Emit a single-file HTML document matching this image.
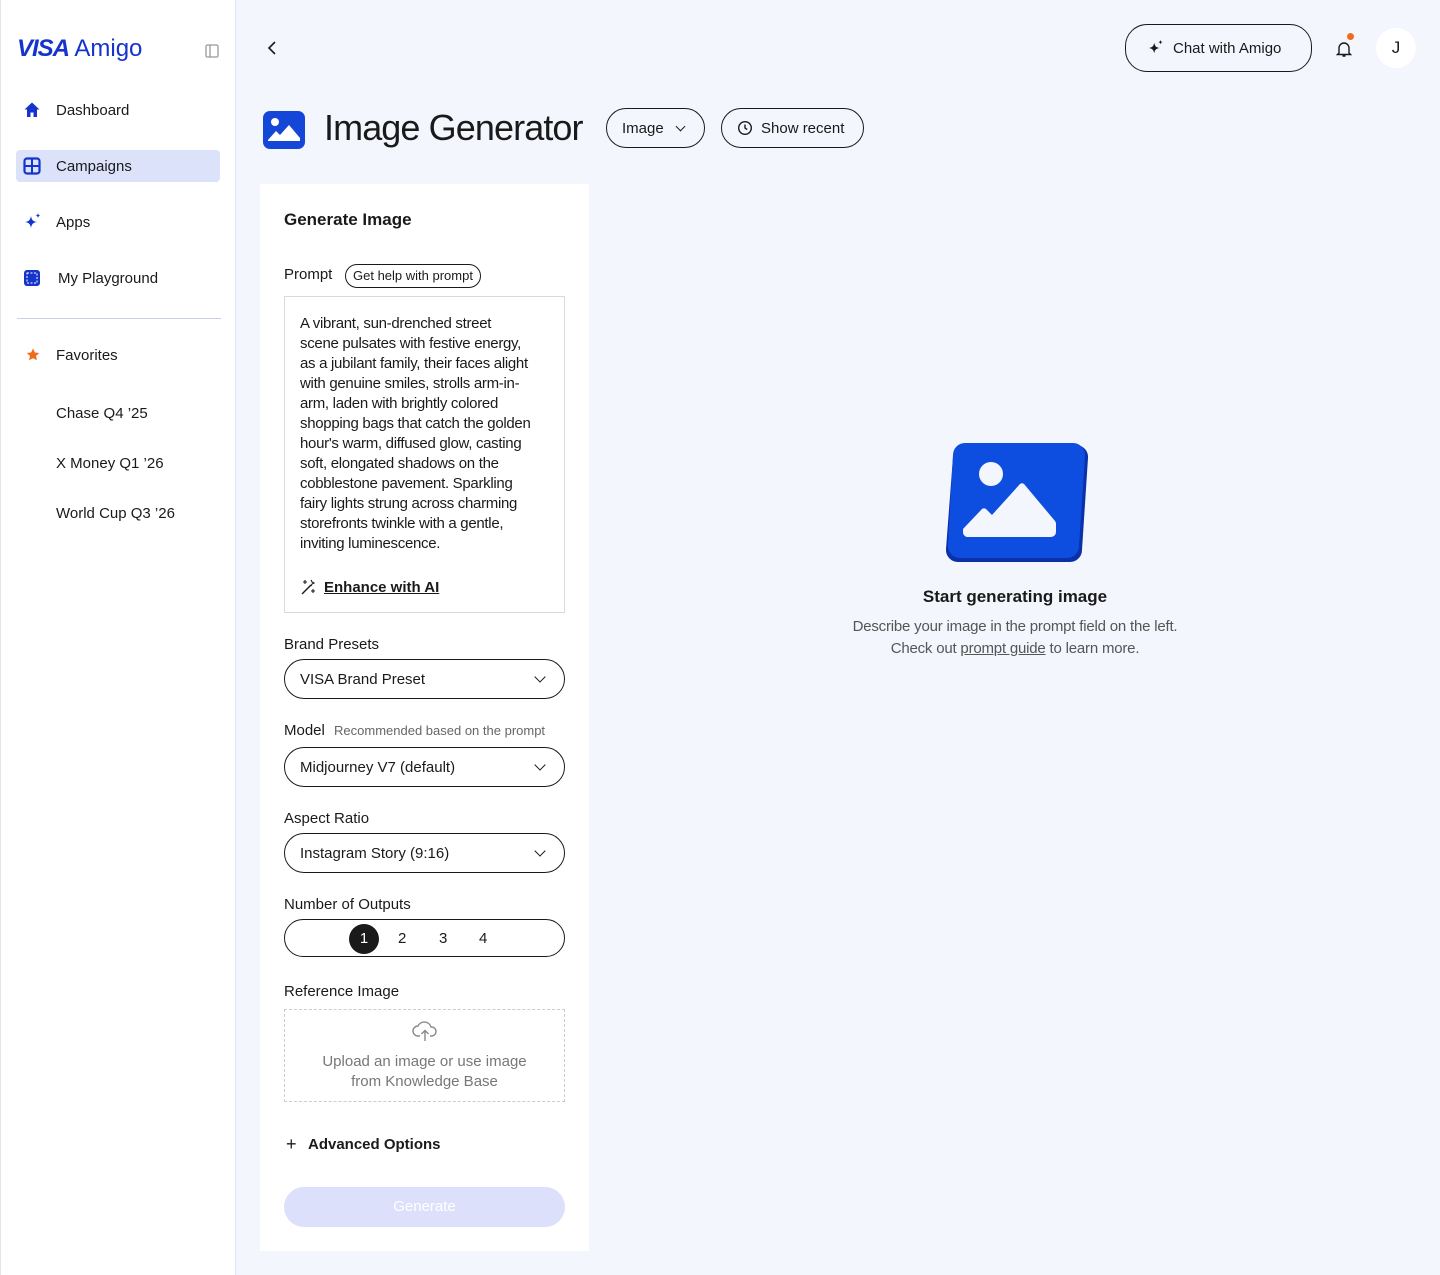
<!DOCTYPE html>
<html><head><meta charset="utf-8"><style>
*{box-sizing:border-box;margin:0;padding:0}
body{width:1440px;height:1275px;background:#f4f6fe;font-family:"Liberation Sans",sans-serif;color:#1a1a1a;position:relative;overflow:hidden}
.sb{position:absolute;left:0;top:0;width:236px;height:1275px;background:#fff;border-right:1px solid #e3e5ee;border-left:1px solid #e3e5ee}
.logo{position:absolute;left:16px;top:35px;font-size:24px;color:#1434cb}
.logo b{font-style:italic;font-weight:900;letter-spacing:-1px}
.nav{position:absolute;left:15px;width:204px;height:32px;display:flex;align-items:center;font-size:15px;padding-left:40px}
.nav svg{position:absolute;left:7px;top:7px}
.abs{position:absolute}
.pill{position:absolute;border:1px solid #1a1a1a;border-radius:22px;display:flex;align-items:center;font-size:15px}
.panel{position:absolute;left:260px;top:184px;width:329px;height:1067px;background:#fff}
.lbl{position:absolute;left:24px;font-size:15px}
.sel{position:absolute;left:24px;width:281px;height:40px;border:1px solid #1a1a1a;border-radius:20px;font-size:15px;padding-left:15px;display:flex;align-items:center}
.sel:after{content:"";position:absolute;right:20px;top:13px;width:7px;height:7px;border-right:1.3px solid #1a1a1a;border-bottom:1.3px solid #1a1a1a;transform:rotate(45deg)}
</style></head><body>
<div class="sb">
<div class="logo"><b>VISA</b> Amigo</div>
<svg class="abs" style="left:204px;top:44px" width="14" height="14" viewBox="0 0 14 14"><rect x="1" y="1" width="12" height="12" rx="1.5" fill="none" stroke="#999" stroke-width="1.3"/><line x1="5" y1="1" x2="5" y2="13" stroke="#999" stroke-width="1.3"/></svg>
<div class="nav" style="top:94px"><svg width="18" height="18" viewBox="0 0 18 18"><path d="M9 1.5 1.5 8.5H4V16h3.5v-4.5h3V16H14V8.5h2.5z" fill="#1434cb"/></svg>Dashboard</div>
<div class="nav" style="top:150px;background:#dce2fa;border-radius:4px"><svg width="18" height="18" viewBox="0 0 18 18"><rect x="1.5" y="1.5" width="15" height="15" rx="2.5" fill="none" stroke="#1434cb" stroke-width="2.2"/><path d="M9 2v14M2 9h14" stroke="#1434cb" stroke-width="2"/></svg>Campaigns</div>
<div class="nav" style="top:206px"><svg width="20" height="18" viewBox="0 0 20 18"><path d="M8 3c.7 4 2 5.3 6 6-4 .7-5.3 2-6 6-.7-4-2-5.3-6-6 4-.7 5.3-2 6-6z" fill="#1434cb"/><path d="M15 0c.3 1.7.9 2.3 2.5 2.5-1.6.3-2.2.9-2.5 2.5-.3-1.6-.9-2.2-2.5-2.5C14.1 2.3 14.7 1.7 15 0z" fill="#1434cb"/></svg>Apps</div>
<div class="nav" style="top:262px;padding-left:42px"><svg width="18" height="18" viewBox="0 0 18 18"><rect x="1" y="1" width="16" height="16" rx="3" fill="#1434cb"/><rect x="4" y="4" width="10" height="10" fill="none" stroke="#fff" stroke-width="1" stroke-dasharray="2 1.5"/></svg>My Playground</div>
<div class="abs" style="left:16px;top:318px;width:204px;height:1px;background:#c9d0ee"></div>
<div class="nav" style="top:339px"><svg width="16" height="16" viewBox="0 0 16 16" style="left:9px;top:8px"><path d="M8 1.5l1.9 4 4.3.5-3.2 3 .9 4.3L8 11.2l-3.9 2.1.9-4.3-3.2-3 4.3-.5z" fill="#f26b1d"/></svg>Favorites</div>
<div class="nav" style="top:397px">Chase Q4 ’25</div>
<div class="nav" style="top:447px">X Money Q1 ’26</div>
<div class="nav" style="top:497px">World Cup Q3 ’26</div>
</div>
<svg class="abs" style="left:264px;top:40px" width="16" height="16" viewBox="0 0 16 16"><path d="M11 2 5 8l6 6" fill="none" stroke="#1a1a1a" stroke-width="1.6"/></svg>
<div class="pill" style="left:1125px;top:24px;width:187px;height:48px;padding-left:47px">Chat with Amigo</div>
<svg class="abs" style="left:1147px;top:39px" width="18" height="18" viewBox="0 0 20 18"><path d="M8 3c.7 4 2 5.3 6 6-4 .7-5.3 2-6 6-.7-4-2-5.3-6-6 4-.7 5.3-2 6-6z" fill="#1a1a1a"/><path d="M15 0c.3 1.7.9 2.3 2.5 2.5-1.6.3-2.2.9-2.5 2.5-.3-1.6-.9-2.2-2.5-2.5C14.1 2.3 14.7 1.7 15 0z" fill="#1a1a1a"/></svg>
<svg class="abs" style="left:1336px;top:40px" width="16" height="18" viewBox="0 0 16 18"><path d="M3 13V8a5 5 0 0 1 10 0v5l1.5 1.5h-13zM6.5 16h3" fill="none" stroke="#1a1a1a" stroke-width="1.4"/></svg>
<div class="abs" style="left:1347px;top:33px;width:7px;height:7px;border-radius:50%;background:#f26b1d"></div>
<div class="abs" style="left:1376px;top:28px;width:40px;height:40px;border-radius:50%;background:#fff;font-size:17px;display:flex;align-items:center;justify-content:center">J</div>
<svg class="abs" style="left:262px;top:110px" width="44" height="40" viewBox="0 0 44 40"><rect x="1" y="1" width="42" height="38" rx="7" fill="#1446d8"/><circle cx="13" cy="12" r="4" fill="#fff"/><path d="M6 30l8-9 4 4 9-10 11 13v3H6z" fill="#fff"/></svg>
<div class="abs" style="left:324px;top:107px;font-size:36px;letter-spacing:-.9px">Image Generator</div>
<div class="pill" style="left:606px;top:108px;width:99px;height:40px;padding-left:15px">Image<span style="margin-left:13px;width:7px;height:7px;border-right:1.2px solid #1a1a1a;border-bottom:1.2px solid #1a1a1a;transform:rotate(45deg);margin-top:-4px"></span></div>
<div class="pill" style="left:721px;top:108px;width:143px;height:40px;padding-left:39px">Show recent</div>
<svg class="abs" style="left:737px;top:120px" width="16" height="16" viewBox="0 0 16 16"><circle cx="8" cy="8" r="6.3" fill="none" stroke="#1a1a1a" stroke-width="1.4"/><path d="M8 4.5V8l2.2 1.6" fill="none" stroke="#1a1a1a" stroke-width="1.4"/></svg>
<div class="panel">
<div class="abs" style="left:24px;top:26px;font-size:17px;font-weight:bold">Generate Image</div>
<div class="lbl" style="top:82px">Prompt</div>
<div class="abs" style="left:85px;top:80px;height:24px;border:1px solid #1a1a1a;border-radius:12px;font-size:13px;padding:0 7px;line-height:22px">Get help with prompt</div>
<div class="abs" style="left:24px;top:112px;width:281px;height:317px;border:1px solid #d9d9d9;padding:17px 0 0 15px;font-size:15px;line-height:20px;letter-spacing:-.3px;white-space:nowrap">A vibrant, sun-drenched street<br>scene pulsates with festive energy,<br>as a jubilant family, their faces alight<br>with genuine smiles, strolls arm-in-<br>arm, laden with brightly colored<br>shopping bags that catch the golden<br>hour's warm, diffused glow, casting<br>soft, elongated shadows on the<br>cobblestone pavement. Sparkling<br>fairy lights strung across charming<br>storefronts twinkle with a gentle,<br>inviting luminescence.
<div style="margin-top:24px;padding-left:24px;text-decoration:underline;font-weight:bold;position:relative;letter-spacing:0">Enhance with AI<svg style="position:absolute;left:0;top:1px" width="17" height="17" viewBox="0 0 17 17"><path d="M2 15 11 6" stroke="#1a1a1a" stroke-width="1.4"/><path d="M5 1v4M3 3h4M13 10v4M11 12h4M11 1l1 2 2 1-2 1-1 2" fill="none" stroke="#1a1a1a" stroke-width="1.1"/></svg></div></div>
<div class="lbl" style="top:452px">Brand Presets</div>
<div class="sel" style="top:475px">VISA Brand Preset</div>
<div class="lbl" style="top:538px">Model <span style="font-size:13px;color:#666;margin-left:5px">Recommended based on the prompt</span></div>
<div class="sel" style="top:563px">Midjourney V7 (default)</div>
<div class="lbl" style="top:626px">Aspect Ratio</div>
<div class="sel" style="top:649px">Instagram Story (9:16)</div>
<div class="lbl" style="top:712px">Number of Outputs</div>
<div class="abs" style="left:24px;top:735px;width:281px;height:38px;border:1px solid #1a1a1a;border-radius:19px;font-size:15px">
<div class="abs" style="left:64px;top:4px;width:30px;height:30px;border-radius:50%;background:#1a1a1a;color:#fff;text-align:center;line-height:30px">1</div>
<span class="abs" style="left:113px;top:10px">2</span><span class="abs" style="left:154px;top:10px">3</span><span class="abs" style="left:194px;top:10px">4</span></div>
<div class="lbl" style="top:799px">Reference Image</div>
<div class="abs" style="left:24px;top:825px;width:281px;height:93px;border:1px dashed #ccc;text-align:center;font-size:15px;color:#777;line-height:20px;padding-top:42px">Upload an image or use image<br>from Knowledge Base</div>
<svg class="abs" style="left:152px;top:836px" width="26" height="22" viewBox="0 0 26 22"><path d="M8 16H6a5 5 0 0 1 0-10 7 7 0 0 1 13 1 4.5 4.5 0 0 1 1 9h-2M13 21v-10M9.5 14 13 10.5 16.5 14" fill="none" stroke="#888" stroke-width="1.4"/></svg>
<div class="abs" style="left:26px;top:950px;font-size:18px">+</div>
<div class="abs" style="left:48px;top:952px;font-size:15px;font-weight:bold">Advanced Options</div>
<div class="abs" style="left:24px;top:1003px;width:281px;height:40px;border-radius:20px;background:#dce0fb;color:#fff;font-size:15px;text-align:center;line-height:40px">Generate</div>
</div>
<svg class="abs" style="left:946px;top:441px" width="142" height="123" viewBox="0 0 142 123"><path d="M20 4h110a12 12 0 0 1 12 13l-6 92a12 12 0 0 1-12 12H12A12 12 0 0 1 0 108L7 16A12 12 0 0 1 20 4z" fill="#0a31a8"/><path d="M19 2h108a12 12 0 0 1 12 13l-6 90a12 12 0 0 1-12 12H14A12 12 0 0 1 2 104L7 14A12 12 0 0 1 19 2z" fill="#0d4ee0"/><circle cx="45" cy="33" r="12" fill="#f4f6fe"/><path d="M17 88l19-20a3 3 0 0 1 4 0l6 6 28-31a3 3 0 0 1 4 0l31 37a4 4 0 0 1 1 3v8a5 5 0 0 1-5 5H21a5 5 0 0 1-4-5z" fill="#f4f6fe"/></svg>
<div class="abs" style="left:815px;top:587px;width:400px;text-align:center;font-size:17px;font-weight:bold">Start generating image</div>
<div class="abs" style="left:790px;top:616px;width:450px;text-align:center;font-size:15px;color:#555;line-height:22px;letter-spacing:-.2px">Describe your image in the prompt field on the left.<br>Check out <u>prompt guide</u> to learn more.</div>
</body></html>
